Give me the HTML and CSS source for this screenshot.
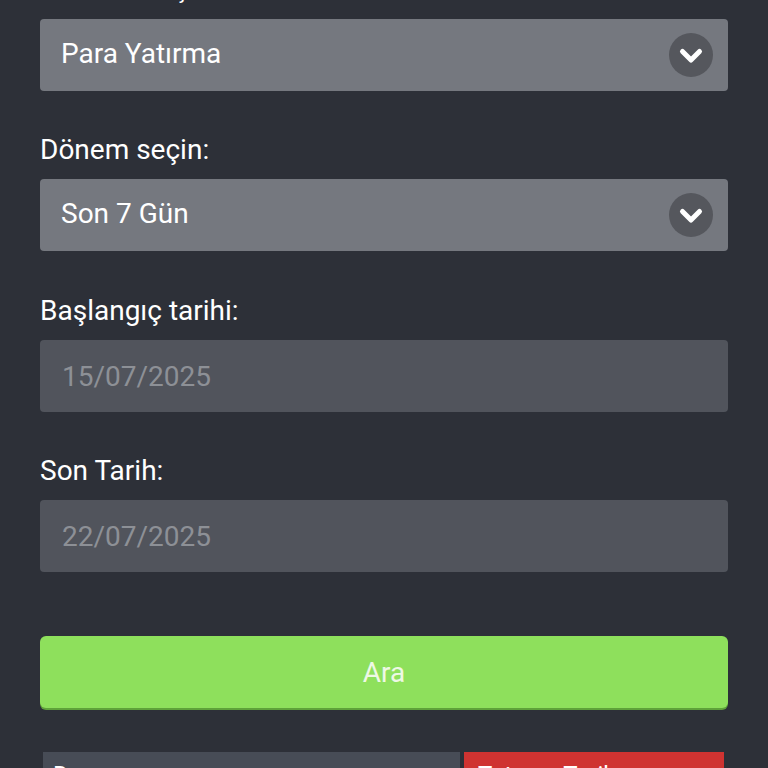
FILE: index.html
```html
<!DOCTYPE html>
<html lang="tr">
<head>
<meta charset="utf-8">
<link rel="stylesheet" href="styles.css">
</head>
<body>
<div class="form">
  <div class="field">
    <div class="label top">Hareket seçin:</div>
    <div class="select">
      <span>Para Yatırma</span>
      <span class="chev"><svg width="44" height="44" viewBox="0 0 44 44"><circle cx="22" cy="22" r="22" fill="#55575d"/><path d="M13.5 18.5 L22 27 L30.5 18.5" fill="none" stroke="#fff" stroke-width="5" stroke-linecap="round" stroke-linejoin="round"/></svg></span>
    </div>
  </div>
  <div class="field">
    <div class="label">Dönem seçin:</div>
    <div class="select">
      <span>Son 7 Gün</span>
      <span class="chev"><svg width="44" height="44" viewBox="0 0 44 44"><circle cx="22" cy="22" r="22" fill="#55575d"/><path d="M13.5 18.5 L22 27 L30.5 18.5" fill="none" stroke="#fff" stroke-width="5" stroke-linecap="round" stroke-linejoin="round"/></svg></span>
    </div>
  </div>
  <div class="field f3">
    <div class="label">Başlangıç tarihi:</div>
    <div class="input">15/07/2025</div>
  </div>
  <div class="field">
    <div class="label">Son Tarih:</div>
    <div class="input">22/07/2025</div>
  </div>
  <div class="btn">Ara</div>
  <div class="bottom">
    <div class="cell gray">Durum</div>
    <div class="cell red">Tutar&nbsp;&nbsp;&nbsp;&nbsp;&nbsp;Tarih</div>
  </div>
</div>
</body>
</html>
```

FILE: styles.css
```css
html, body {
  margin: 0;
  padding: 0;
  background: #2d3038;
  overflow: hidden;
}
body {
  font-family: Roboto, "Noto Sans", sans-serif;
  color: #ffffff;
}
.form {
  margin-top: -29px;
  padding: 0 40px;
}
.field {
  margin-bottom: 42px;
}
.f3 {
  margin-top: 43px;
}
.label {
  font-size: 28px;
  line-height: 34px;
  height: 34px;
  margin-bottom: 12px;
  color: #ffffff;
  white-space: nowrap;
}
.label.top {
  margin-bottom: 14px;
}
.select {
  height: 72px;
  border-radius: 4px;
  background: #75787f;
  display: flex;
  align-items: center;
  justify-content: space-between;
  padding: 0 15px 0 21px;
  font-size: 28px;
  box-sizing: border-box;
}
.select span:first-child {
  margin-top: -3px;
}
.chev {
  display: flex;
}
.input {
  height: 72px;
  border-radius: 4px;
  background: #51545c;
  display: flex;
  align-items: center;
  padding: 0 22px;
  font-size: 28px;
  color: #8d9096;
  box-sizing: border-box;
}
.btn {
  margin-top: 64px;
  height: 72px;
  border-radius: 6px;
  background: #8ee05c;
  box-shadow: 0 2px 0 #5fa23a;
  display: flex;
  align-items: center;
  justify-content: center;
  font-size: 28px;
  color: #eef8e6;
}
.bottom {
  margin-top: 44px;
  display: flex;
  gap: 4px;
  padding: 0 4px 0 3px;
}
.cell {
  height: 60px;
  font-size: 24px;
  padding: 9px 10px;
  box-sizing: border-box;
}
.gray {
  width: 417px;
  background: #474c56;
}
.red {
  width: 260px;
  background: #cf3331;
  padding-left: 14px;
}
```
